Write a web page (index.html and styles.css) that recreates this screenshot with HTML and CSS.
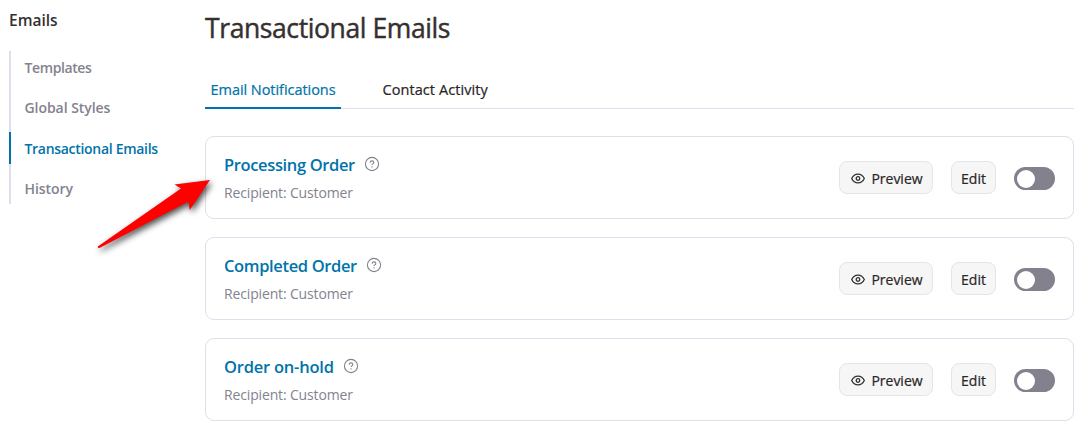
FILE: index.html
```
<!DOCTYPE html>
<html lang="en">

<head>
    <meta charset="UTF-8">
    <meta name="viewport" content="width=device-width, initial-scale=1.0">
    <title>Transactional Emails</title>
    <link rel="stylesheet" href="styles.css">
</head>

<body>

    <!-- Shared icons -->
    <svg class="sprite" aria-hidden="true">
        <symbol id="icon-help" viewBox="0 0 16 16">
            <circle cx="8" cy="8" r="6.6" />
            <path d="M6.2 6.7c0-1.1.8-1.8 1.8-1.8s1.8.7 1.8 1.6c0 1.3-1.8 1.4-1.8 2.6" />
            <path d="M8 10.3v1.1" />
        </symbol>
        <symbol id="icon-eye" viewBox="0 0 14 11">
            <path d="M.7 5.5C2 2.7 4.3 1.2 7 1.2S12 2.7 13.3 5.5C12 8.3 9.7 9.8 7 9.8S2 8.3.7 5.5z" />
            <circle cx="7" cy="5.5" r="1.8" />
        </symbol>
    </svg>

    <div class="page">

        <aside class="sidebar">
            <h2>Emails</h2>
            <nav class="side-nav">
                <a class="side-link narrow">Templates</a>
                <a class="side-link">Global Styles</a>
                <a class="side-link active">Transactional Emails</a>
                <a class="side-link">History</a>
            </nav>
        </aside>

        <main class="content">
            <h1>Transactional Emails</h1>

            <div class="tabs">
                <a class="tab active">Email Notifications</a>
                <a class="tab">Contact Activity</a>
            </div>

            <div class="cards">
                <div class="card">
                    <div class="card-info">
                        <h3>Processing Order<svg class="help"><use href="#icon-help" /></svg></h3>
                        <p>Recipient: Customer</p>
                    </div>
                    <button type="button" class="btn preview"><svg class="eye"><use href="#icon-eye" /></svg>Preview</button>
                    <button type="button" class="btn edit">Edit</button>
                    <span class="toggle" role="switch" aria-checked="false"></span>
                </div>

                <div class="card">
                    <div class="card-info">
                        <h3>Completed Order<svg class="help"><use href="#icon-help" /></svg></h3>
                        <p>Recipient: Customer</p>
                    </div>
                    <button type="button" class="btn preview"><svg class="eye"><use href="#icon-eye" /></svg>Preview</button>
                    <button type="button" class="btn edit">Edit</button>
                    <span class="toggle" role="switch" aria-checked="false"></span>
                </div>

                <div class="card">
                    <div class="card-info">
                        <h3 class="wide">Order on-hold<svg class="help"><use href="#icon-help" /></svg></h3>
                        <p>Recipient: Customer</p>
                    </div>
                    <button type="button" class="btn preview"><svg class="eye"><use href="#icon-eye" /></svg>Preview</button>
                    <button type="button" class="btn edit">Edit</button>
                    <span class="toggle" role="switch" aria-checked="false"></span>
                </div>
            </div>
        </main>

    </div>

    <!-- Arrow pointing at the first notification -->
    <svg class="arrow" viewBox="0 0 130 95" aria-hidden="true">
        <path d="M120 15L84.5 19.5L91 23.5L7.8 81.5Q7.5 83.5 9.5 83L98.5 36.5L99.7 45z" />
    </svg>

</body>

</html>
```

FILE: styles.css
```
* {
    box-sizing: border-box;
}

body {
    font-family: "Open Sans", "Noto Sans", sans-serif;
    background-color: #fff;
    color: #353030;
    margin: 0;
    height: 432px;
    overflow: hidden;
}

h1,
h2,
h3,
p {
    margin: 0;
}

.sprite {
    position: absolute;
    width: 0;
    height: 0;
}

.page {
    display: flex;
    gap: 26px;
    padding: 0 10px 0 9px;
}

.sidebar {
    width: 170px;
    flex: none;
}

.sidebar h2 {
    font-size: 15.5px;
    font-weight: 600;
    line-height: 20px;
    letter-spacing: 0;
    padding-top: 10px;
}

.side-nav {
    display: flex;
    flex-direction: column;
    gap: 8.3px;
    margin-top: 21px;
    height: 153px;
    box-shadow: inset 2px 0 #dfdeec;
}

.side-link {
    height: 32px;
    line-height: 34px;
    padding-left: 15.5px;
    font-size: 14px;
    font-weight: 600;
    letter-spacing: -0.05px;
    color: #84828f;
    white-space: nowrap;
}

.side-link.narrow {
    letter-spacing: -0.4px;
}

.side-link.active {
    letter-spacing: -0.3px;
    color: #0073aa;
    box-shadow: inset 2px 0 #0073aa;
}

.content {
    flex: 1;
}

h1 {
    font-size: 26.5px;
    font-weight: 400;
    line-height: 36px;
    letter-spacing: -0.4px;
    padding-top: 10px;
    white-space: nowrap;
    -webkit-text-stroke: 0.45px;
}

.tabs {
    display: flex;
    gap: 36px;
    height: 38px;
    margin-top: 25px;
    border-bottom: 1px solid #dfdeec;
}

.tab {
    height: 38px;
    padding: 0 5.5px;
    font-size: 14.5px;
    font-weight: 400;
    line-height: 37px;
    letter-spacing: 0.07px;
    color: #2a2627;
    white-space: nowrap;
    -webkit-text-stroke: 0.22px;
}

.tab.active {
    width: 136px;
    letter-spacing: -0.05px;
    color: #0073aa;
    box-shadow: inset 0 -2px #0073aa;
}

.cards {
    display: flex;
    flex-direction: column;
    gap: 18px;
    margin-top: 27px;
}

.card {
    display: flex;
    align-items: center;
    gap: 18px;
    height: 83px;
    padding: 0 18px;
    border: 1px solid #dfdeec;
    border-radius: 9px;
}

.card-info {
    flex: 1;
    padding-top: 2px;
}

.card h3 {
    display: flex;
    align-items: center;
    height: 26px;
    font-size: 16.5px;
    font-weight: 600;
    letter-spacing: -0.36px;
    color: #0073aa;
}

.card h3.wide {
    letter-spacing: -0.22px;
}

.card p {
    margin-top: 3px;
    font-size: 14px;
    line-height: 26px;
    letter-spacing: -0.15px;
    color: #84828f;
}

.help {
    width: 16px;
    height: 16px;
    margin-left: 9.5px;
    fill: none;
    stroke: #84828f;
    stroke-width: 1.1;
}

.btn {
    display: flex;
    align-items: center;
    justify-content: center;
    height: 33px;
    padding: 1px 0 0;
    font-family: inherit;
    font-size: 14px;
    font-weight: 400;
    letter-spacing: 0;
    color: #2a2627;
    background-color: #f6f6f6;
    border: 1px solid #e5e5e7;
    border-radius: 8px;
    -webkit-text-stroke: 0.22px;
}

.preview {
    width: 94px;
    padding-left: 2px;
}

.edit {
    width: 45px;
}

.eye {
    width: 14px;
    height: 11px;
    margin-right: 6px;
    fill: none;
    stroke: #353030;
    stroke-width: 1.3;
}

.toggle {
    width: 41px;
    height: 23px;
    margin-top: 2px;
    padding: 3px;
    border-radius: 12px;
    background-color: #83818e;
}

.toggle::before {
    content: "";
    display: block;
    width: 18px;
    height: 18px;
    border-radius: 50%;
    background-color: #fff;
}

.arrow {
    position: absolute;
    left: 90px;
    top: 165px;
    width: 130px;
    height: 95px;
    overflow: visible;
    fill: #fe0000;
    filter: drop-shadow(2px 3px 3px rgba(0, 0, 0, 0.7));
}
```
